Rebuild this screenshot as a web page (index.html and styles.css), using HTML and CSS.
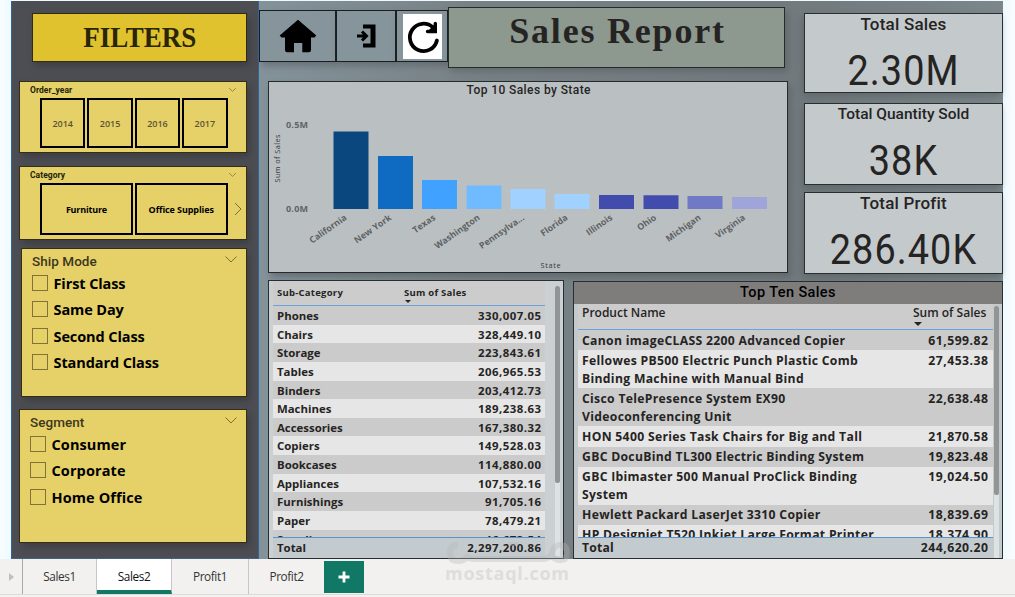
FILE: index.html
```html
<!DOCTYPE html>
<html lang="en">
<head>
<meta charset="utf-8">
<title>Sales Report</title>
<link rel="stylesheet" href="styles.css">
</head>
<body>
<div class="report">
  <aside class="sidebar">
    <h2 class="filters-title"><span>FILTERS</span></h2>
    <section class="slicer slicer-year">
      <header class="slicer-head small"><span>Order_year</span><svg class="chev" viewBox="0 0 12 7"><path d="M1.5 1L6 5.3 10.500 1"/></svg></header>
      <div class="tiles"><button>2014</button><button>2015</button><button>2016</button><button>2017</button></div>
    </section>
    <section class="slicer slicer-cat">
      <header class="slicer-head small"><span>Category</span><svg class="chev" viewBox="0 0 12 7"><path d="M1.500 1L6 5.3 10.500 1"/></svg></header>
      <div class="tiles dark"><button>Furniture</button><button>Office Supplies</button><svg class="next" viewBox="0 0 8 14"><path d="M1 1l6 6-6 6"/></svg></div>
    </section>
    <section class="slicer slicer-ship">
      <header class="slicer-head"><span>Ship Mode</span><svg class="chev" viewBox="0 0 12 7"><path d="M.5 .5L6 6 11.500 .5"/></svg></header>
      <ul class="checks"><li><i></i><span>First Class</span></li><li><i></i><span>Same Day</span></li><li><i></i><span>Second Class</span></li><li><i></i><span>Standard Class</span></li></ul>
    </section>
    <section class="slicer slicer-seg">
      <header class="slicer-head"><span>Segment</span><svg class="chev" viewBox="0 0 12 7"><path d="M.5 .5L6 6 11.500 .5"/></svg></header>
      <ul class="checks wide"><li><i></i><span>Consumer</span></li><li><i></i><span>Corporate</span></li><li><i></i><span>Home Office</span></li></ul>
    </section>
  </aside>

  <main class="main">
    <div class="upper">
      <div class="upper-left">
        <div class="banner">
          <div class="tool tool-home"><svg width="38" height="34" viewBox="0 0 38 34"><path d="M19 .8L37.300 16.500 35.500 18.500H32V31q0 2.200-2.200 2.200H23.300V24H15v9.200H8.200Q6 33.200 6 31V18.500H2.500L.7 16.500Z"/></svg></div>
          <div class="tool tool-exit"><svg width="20" height="24" viewBox="0 0 20 24"><path d="M7 .5H19.500V23.500H7V19.500H14.500V4.500H7Z"/><path d="M1 12h8M6 7.500l4.500 4.500L6 16.500" fill="none" stroke="#000" stroke-width="3"/></svg></div>
          <div class="tool tool-refresh"><svg width="39" height="45" viewBox="0 0 39 45"><path fill="#fff" d="M0 0h39v45H0z"/><path d="M33.900 26.500A13.700 13.700 0 1 1 30 13.500" fill="none" stroke="#000" stroke-width="3.800" stroke-linecap="round"/><path d="M32.300 9.500v8H24.500" fill="none" stroke="#000" stroke-width="3.400" stroke-linecap="round"/><path d="M32 10v8H24Z"/></svg></div>
          <h1>Sales Report</h1>
        </div>
        <section class="chart">
          <svg width="518" height="189" viewBox="269 82 518 189">
            <text class="c-title" x="466.500" y="94" textLength="124">Top 10 Sales by State</text>
            <text class="axis" x="286" y="128" textLength="22">0.5M</text>
            <text class="axis" x="286" y="212" textLength="22">0.0M</text>
            <text class="tiny" transform="translate(280 182.500) rotate(-90)" textLength="48">Sum of Sales</text>
            <text class="tiny" x="540.500" y="268" textLength="20">State</text>
            <g>
              <path fill="#0a477f" d="M333.500 131.500h35V209h-35z"/><path fill="#0f6bc2" d="M378 156h35v53h-35z"/>
              <path fill="#41a1ff" d="M422 180h35v29h-35z"/><path fill="#70bbff" d="M466.500 185.500h35V209h-35z"/>
              <path fill="#a0d1ff" d="M510.500 189h35V209h-35z"/><path fill="#a0d1ff" d="M554.500 194h35v15h-35z"/>
              <path fill="#424cac" d="M599 195h35v14h-35z"/><path fill="#424cac" d="M643.500 195.300h35V209h-35z"/>
              <path fill="#7079c3" d="M687.500 196h35v13h-35z"/><path fill="#a0a5d9" d="M732 197h35v12h-35z"/>
            </g>
            <g class="states">
              <text transform="translate(347.500 219) rotate(-35)">California</text>
              <text transform="translate(392 219) rotate(-35)">New York</text>
              <text transform="translate(436 219) rotate(-35)">Texas</text>
              <text transform="translate(480.500 219) rotate(-35)">Washington</text>
              <text transform="translate(525 219) rotate(-35)">Pennsylva...</text>
              <text transform="translate(568.500 219) rotate(-35)">Florida</text>
              <text transform="translate(613 219) rotate(-35)">Illinois</text>
              <text transform="translate(657 219) rotate(-35)">Ohio</text>
              <text transform="translate(701.500 219) rotate(-35)">Michigan</text>
              <text transform="translate(746 219) rotate(-35)">Virginia</text>
            </g>
          </svg>
        </section>
      </div>
      <div class="kpis">
        <article><h3>Total Sales</h3><b>2.30M</b></article>
        <article><h3>Total Quantity Sold</h3><b>38K</b></article>
        <article><h3>Total Profit</h3><b>286.40K</b></article>
      </div>
    </div>
    <div class="lower">
      <section class="panel sub">
        <div class="grid">
          <div class="thead"><span>Sub-Category</span><span class="sorted">Sum of Sales</span></div>
          <div class="rows">
            <div><span>Phones</span><span>330,007.05</span></div>
            <div><span>Chairs</span><span>328,449.10</span></div>
            <div><span>Storage</span><span>223,843.61</span></div>
            <div><span>Tables</span><span>206,965.53</span></div>
            <div><span>Binders</span><span>203,412.73</span></div>
            <div><span>Machines</span><span>189,238.63</span></div>
            <div><span>Accessories</span><span>167,380.32</span></div>
            <div><span>Copiers</span><span>149,528.03</span></div>
            <div><span>Bookcases</span><span>114,880.00</span></div>
            <div><span>Appliances</span><span>107,532.16</span></div>
            <div><span>Furnishings</span><span>91,705.16</span></div>
            <div><span>Paper</span><span>78,479.21</span></div>
            <div><span>Supplies</span><span>46,673.54</span></div>
          </div>
          <div class="total"><span>Total</span><span>2,297,200.86</span></div>
        </div>
        <div class="rail"><i></i></div>
      </section>
      <section class="panel top">
        <h3>Top Ten Sales</h3>
        <div class="top-body">
        <div class="grid">
          <div class="thead"><span>Product Name</span><span class="sorted">Sum of Sales</span></div>
          <div class="rows">
            <div><span>Canon imageCLASS 2200 Advanced Copier</span><span>61,599.82</span></div>
            <div><span>Fellowes PB500 Electric Punch Plastic Comb<br>Binding Machine with Manual Bind</span><span>27,453.38</span></div>
            <div><span>Cisco TelePresence System EX90<br>Videoconferencing Unit</span><span>22,638.48</span></div>
            <div><span>HON 5400 Series Task Chairs for Big and Tall</span><span>21,870.58</span></div>
            <div><span>GBC DocuBind TL300 Electric Binding System</span><span>19,823.48</span></div>
            <div><span>GBC Ibimaster 500 Manual ProClick Binding<br>System</span><span>19,024.50</span></div>
            <div><span>Hewlett Packard LaserJet 3310 Copier</span><span>18,839.69</span></div>
            <div><span>HP Designjet T520 Inkjet Large Format Printer</span><span>18,374.90</span></div>
          </div>
          <div class="total"><span>Total</span><span>244,620.20</span></div>
        </div>
        <div class="rail"><i></i></div>
        </div>
      </section>
    </div>
  </main>
</div>
<nav class="tabs">
  <span class="scroller"><svg width="5" height="8" viewBox="0 0 5 8"><path d="M0 0l5 4-5 4z" fill="#c0bfbe"/></svg></span>
  <a class="t1">Sales1</a><a class="t2 active">Sales2</a><a class="t3">Profit1</a><a class="t4">Profit2</a>
  <button class="add"><svg width="12" height="12" viewBox="0 0 12 12"><path d="M6 .5v11M.5 6h11" stroke="#fff" stroke-width="2.800"/></svg></button>
</nav>
<svg class="watermark" width="130" height="50" viewBox="442 537 130 50">
  <g fill="none" stroke="#b4b4b4" stroke-opacity=".35" stroke-width="6"><path d="M458 545q-8 0-8 8t8 8q6 0 9-4 3 2 8 2h67q8 0 10-6 2-8 8-8 7 0 7 8 0 7-7 7-6 0-8-5"/><path d="M508 544h10" stroke-width="4"/></g>
  <text x="445" y="580" textLength="124">mostaql.com</text>
</svg>
</body>
</html>
```
FILE: styles.css
```css
*{box-sizing:border-box}
body{margin:0;width:1015px;height:597px;overflow:hidden;display:flex;flex-direction:column;background:#f2f1f0;font-family:"Open Sans","Noto Sans",sans-serif;color:#252423;position:relative}
h1,h2,h3,ul{margin:0;padding:0}
button{font:inherit;background:none;border:0;padding:0;color:inherit}
.report{height:559px;flex:none;display:flex;padding:1px 12px 0 11px;background:linear-gradient(90deg,#f7fdff,#effaff 11px,#effaff 1003px,#f8fdff)}
.sidebar{width:248px;background:#4d4e54;border-left:1px solid #31649b;border-right:1px solid #31649b;border-bottom:1px solid #45637c;padding:12px 11px 0 7px;display:flex;flex-direction:column}
.filters-title{margin-left:13px;height:49px;border:1px solid #302b12;background:#e0c22f;box-shadow:3px 4px 6px #3338;font:bold 30px/45px "Liberation Serif",serif;text-align:center;color:#292507}
.filters-title span{display:inline-block;transform:scaleX(.9)}
.slicer{background:#e6d068;border:1px solid #332e17;box-shadow:3px 4px 6px #3338;padding-left:10px;display:flex;flex-direction:column}
.slicer-year{height:72px;margin-top:19px}
.slicer-cat{height:74px;margin-top:13px}
.slicer-ship{height:149px;margin:8px 0 0 2px;padding-left:10px}
.slicer-seg{height:134px;margin-top:12px}
.slicer-head{display:flex;justify-content:space-between;align-items:center;font:500 13.500px/25px Roboto,sans-serif;letter-spacing:.05px;color:#3c3720;padding-right:9px;height:25px}
.slicer-head.small{font-size:8.500px;line-height:17px;height:16px;letter-spacing:.05px;color:#221f0c;font-weight:700}
.slicer-head .chev{width:12px;height:7px;margin-top:-4px}
.slicer-head.small .chev{width:9px;height:6px;margin-top:0}
.chev,.next{fill:none;stroke:#7c7038;stroke-width:1}
.tiles{display:flex;gap:2px;margin-left:10px;align-items:center;font-size:9px;color:#5a5431;letter-spacing:.4px}
.tiles button{width:45.400px;height:50px;border:2px solid #000;font-weight:600}
.tiles.dark button{width:92.800px;height:52px;color:#000;letter-spacing:-.1px;font-weight:700}
.tiles.dark button:first-child{letter-spacing:-.2px}
.next{width:8px;height:14px;margin-left:4px}
.checks{list-style:none;font-weight:700;font-size:14.500px;color:#000;letter-spacing:-.1px}
.checks.wide{letter-spacing:.1px}
.checks li{height:26.300px;display:flex;gap:5.500px;align-items:flex-start}
.checks i{width:16px;height:16px;border:1px solid #807238;margin-top:1px}
.checks span{line-height:20.500px}
.main{width:744px;background:linear-gradient(90deg,#84929a,#788286 30%,#727a7e 75%,#7b878b);display:flex;flex-direction:column}
.upper{display:flex;justify-content:space-between;height:279px}
.upper-left{width:529px;padding-top:6px}
.banner{display:flex;align-items:flex-start}
.tool{margin-top:3px;height:52px;background:#86949b;border:1px solid #191e20;display:flex;align-items:center;justify-content:center;box-shadow:3px 4px 6px #555b6088}
.tool-home{width:77px}.tool-exit{width:60px}.tool-refresh{width:52px}
.banner h1{width:337px;height:61px;border:1px solid #252b29;background:#8d988f;box-shadow:3px 4px 6px #555b6088;font:bold 36px/46px "Liberation Serif",serif;text-align:center;letter-spacing:1.800px;padding-left:2px;color:#252423;z-index:1}
.chart{margin:13px 0 0 9px;width:520px;height:192px;background:#bac0c2;border:1px solid #252b2d;box-shadow:3px 4px 6px #555b6099}
.chart svg{display:block}
.c-title{font:500 12px Roboto,sans-serif;fill:#252423}
.axis{font-size:9px;font-weight:700;fill:#5f6468}
.tiny{font-size:7.300px;font-weight:500;fill:#33383a}
.states{font-size:8.900px;font-weight:700;text-anchor:end;fill:#5f6264}
.kpis{width:199px;padding-top:12px;display:flex;flex-direction:column}
.kpis article{height:80px;background:#c4c9cc;border:1px solid #292e30;box-shadow:-2px 4px 6px #555b6088;text-align:center}
.kpis article:nth-child(2){margin-top:10px;height:82px}
.kpis article:nth-child(3){margin-top:7px;height:82px}
.kpis h3{font:500 17px/21px Roboto,sans-serif;letter-spacing:.2px}
.kpis article:nth-child(2) h3{font-size:15.500px;letter-spacing:0}
.kpis b{display:block;font:400 42px/72px Roboto,sans-serif;letter-spacing:1.200px;transform:scaleX(.9)}
.lower{display:flex;gap:9px;padding-left:9px;height:279px}
.panel{height:279px;border:1px solid #292e30;background:#c4c9cc}
.sub{width:296px;display:flex;padding-left:4px;background:#cbd0d3}
.sub .grid{width:272px;margin-right:10px}
.grid{display:flex;flex-direction:column;overflow:hidden}
.thead{display:flex;background:#ccc;border-bottom:1px solid #6ba4dc;font-weight:600}
.thead span{padding-left:4px}
.sorted{position:relative}
.sorted::after{content:"";position:absolute;left:5px;bottom:2px;border:3px solid transparent;border-top:3px solid #252423;border-bottom:0}
.rows{overflow:hidden;font-weight:700}
.rows>div,.total{display:flex;justify-content:space-between;padding:0 4px}
.rows>div{background:#e6e6e6}
.rows>div:nth-child(odd){background:#cbcbcb}
.total{border-top:1px solid #5b93cd;background:#c4cbce;font-weight:700}
.sub .thead{height:25px;font-size:9.500px;font-weight:700;line-height:23px;letter-spacing:.25px}
.sub .thead span:first-child{width:127px}
.sub .rows{height:231px;font-size:11.400px}
.rows>div>span:last-child,.total span:last-child{letter-spacing:.5px;margin-right:-.5px}
.sub .rows>div{height:18.640px;line-height:19px}
.sub .total{height:21px;font-size:11.400px;line-height:20px}
.rail{width:5px;background:#dde2e5;margin-top:5px;height:270px}
.rail i{display:block;width:5px;height:197px;background:#929596;border-radius:2px}
.top{width:430px;margin-top:1px;height:278px}
.top h3{height:22px;background:#7f7c7c;text-align:center;font:500 14.500px/21px Roboto,sans-serif;letter-spacing:.4px;color:#000}
.top-body{display:flex;padding-left:4px}
.top .grid{width:415px;margin-right:1px;font-size:12.200px}
.top .thead{height:26px;justify-content:space-between;font-size:12px;line-height:18px}
.top .thead .sorted{padding:0 5px 0 0;width:80px;white-space:nowrap}
.top .sorted::after{border-width:4px 4px 0;bottom:3px;left:1px}
.top .rows{height:207px;letter-spacing:.31px}
.top .rows>div{line-height:18px;padding:1.500px 5px .650px 4px}
.top .total{height:21px;line-height:20px;padding-right:5px;letter-spacing:.2px}
.top .rail{margin-top:2px;height:252px}
.top .rail i{height:189px}
.tabs{height:36px;flex:none;display:flex;background:#f2f1f0;border-bottom:1px solid #dddcdb;font-size:11.800px;letter-spacing:-.4px;color:#333;line-height:35px;text-align:center}
.tabs a{border-right:1px solid #c8c6c4}
.scroller{width:23px;border-right:1px solid #aaa;display:flex;align-items:center;justify-content:center}
.t1{width:74px}.tabs .t2{width:75px;background:#fff;border-bottom:4px solid #117865;color:#111}.t3{width:77px}.tabs .t4{width:75px;border:0}
.add{width:40px;height:32px;margin-top:2px;background:#117865;display:flex;align-items:center;justify-content:center}
.watermark{position:absolute;left:442px;top:537px}
.watermark text{font:bold 18px "Open Sans",sans-serif;fill:#dedddc}
```
